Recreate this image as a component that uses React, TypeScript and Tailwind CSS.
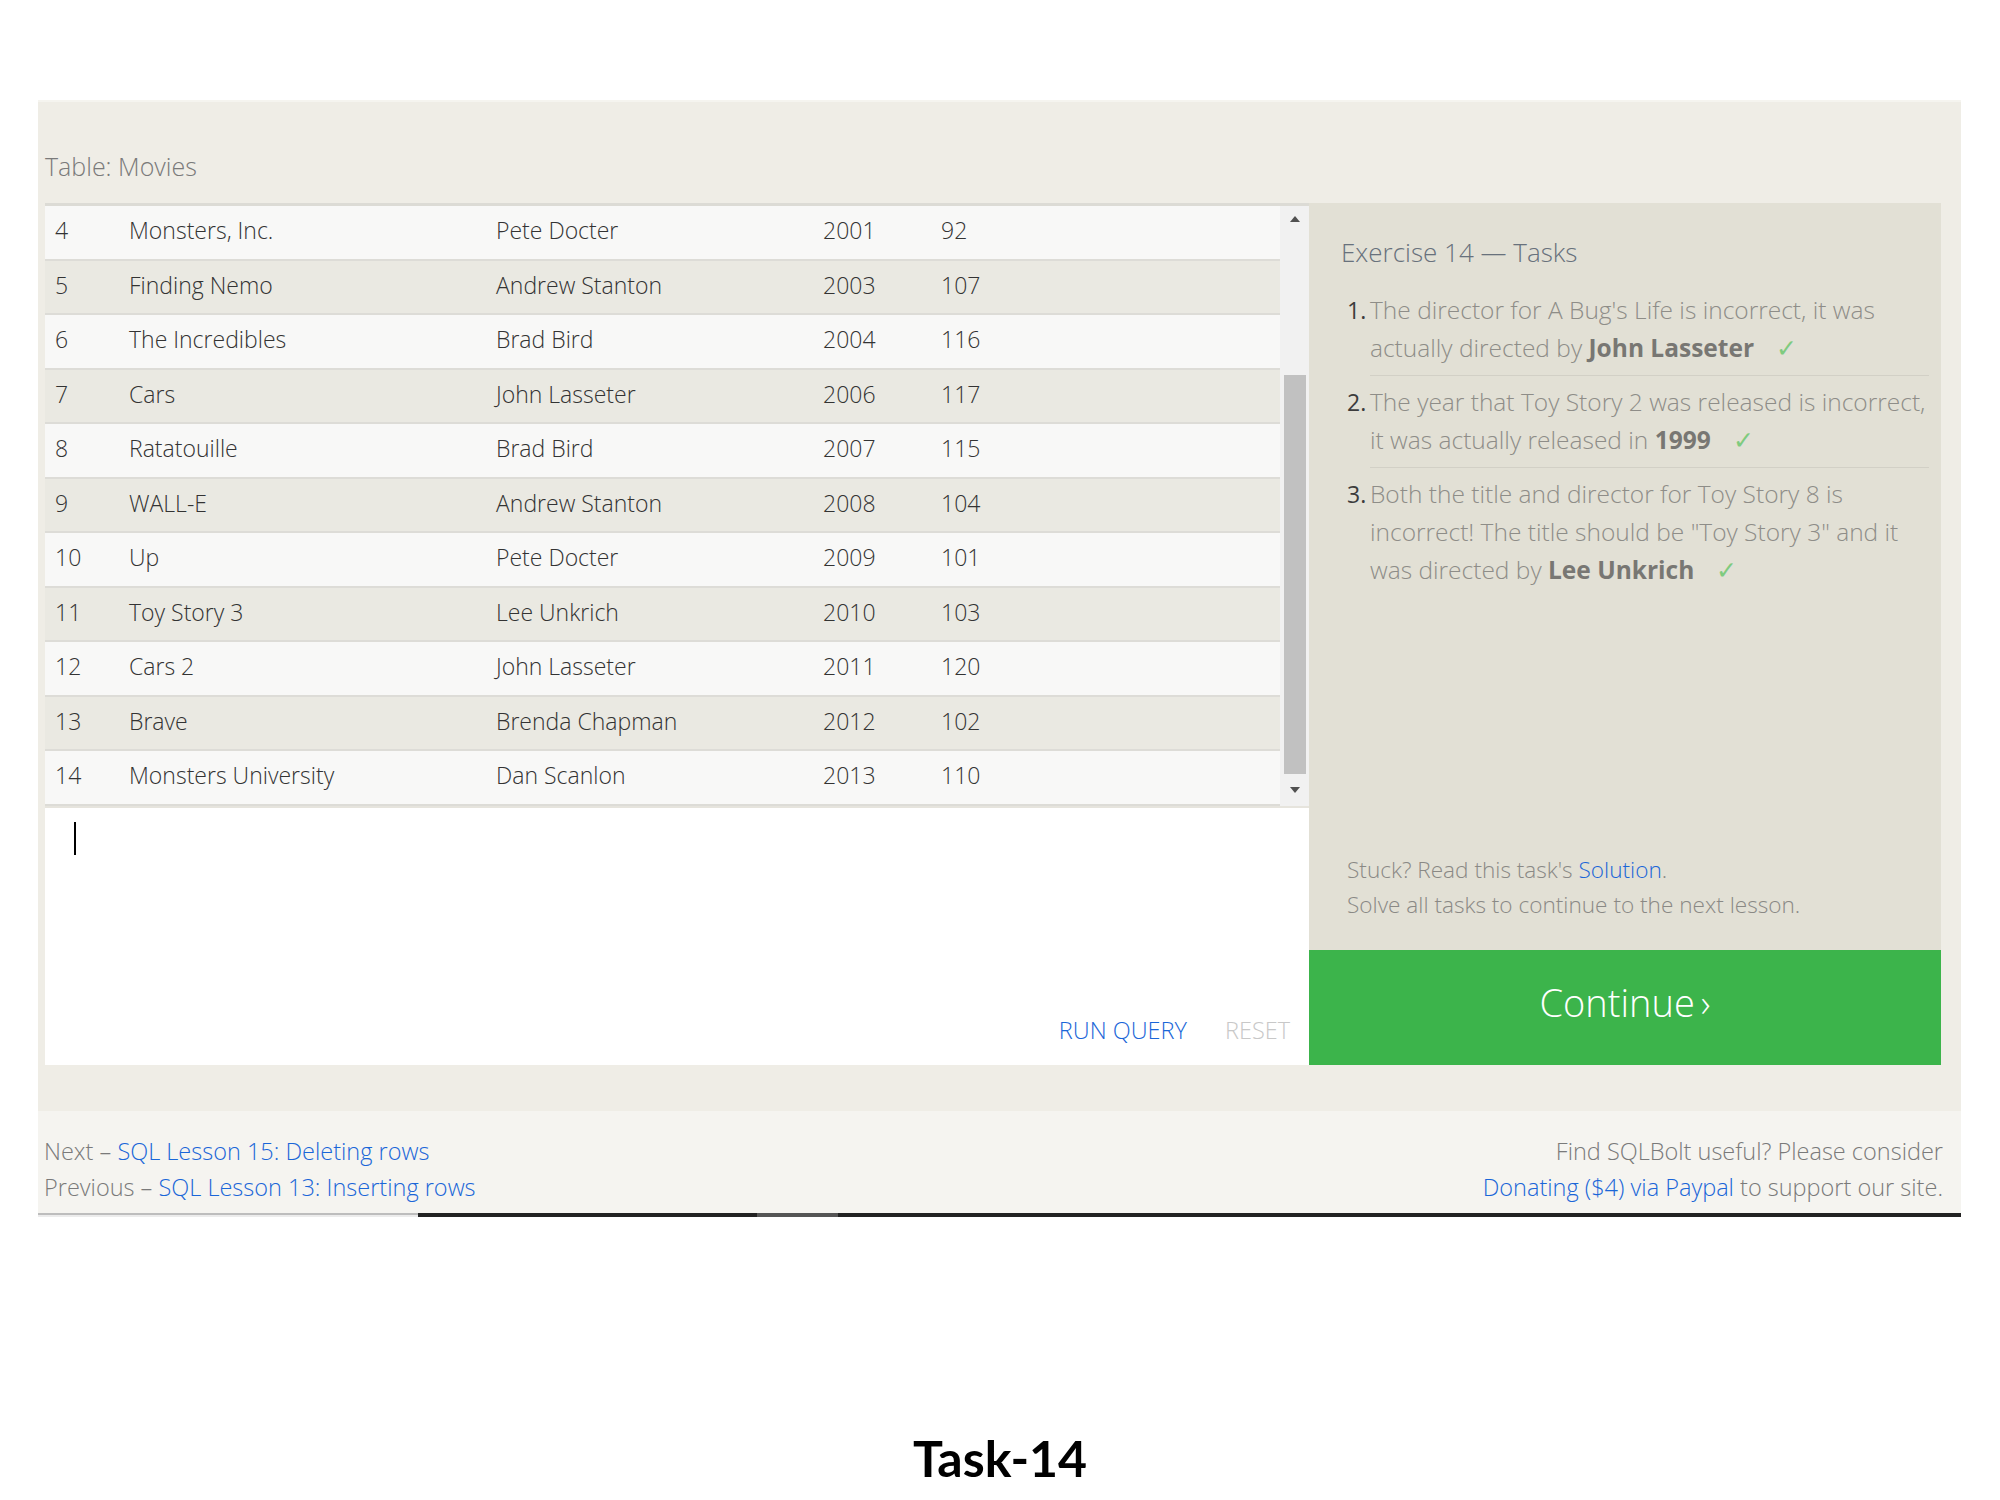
const rows: [number, string, string, number, number][] = [
  [4, "Monsters, Inc.", "Pete Docter", 2001, 92],
  [5, "Finding Nemo", "Andrew Stanton", 2003, 107],
  [6, "The Incredibles", "Brad Bird", 2004, 116],
  [7, "Cars", "John Lasseter", 2006, 117],
  [8, "Ratatouille", "Brad Bird", 2007, 115],
  [9, "WALL-E", "Andrew Stanton", 2008, 104],
  [10, "Up", "Pete Docter", 2009, 101],
  [11, "Toy Story 3", "Lee Unkrich", 2010, 103],
  [12, "Cars 2", "John Lasseter", 2011, 120],
  [13, "Brave", "Brenda Chapman", 2012, 102],
  [14, "Monsters University", "Dan Scanlon", 2013, 110],
];

function Check() {
  return <span className="ml-[22px] text-[#7fcb7f]">✓</span>;
}

function App() {
  return (
    <div className="min-h-screen bg-white pt-[100px] font-['Open_Sans',sans-serif] font-light">
      <div className="mx-[38px] w-[1923px] bg-[#efede6] border-t-2 border-[#f5f4ef]">
        {/* table + editor + tasks */}
        <div className="pl-[7px] pr-[20px] pt-[49px]">
          <div className="mb-[21px] text-[25px] leading-[31px] text-[#7a7a7a]">Table: Movies</div>

          <div className="flex">
            {/* left column */}
            <div className="w-[1264px] flex flex-col">
              <div className="flex border-t-[3px] border-[#dcdbd5]">
                <div className="flex-1">
                  {rows.map((r, i) => (
                    <div
                      key={r[0]}
                      className={
                        "flex items-center h-[54.5px] pb-[4px] border-b-2 border-[#dddcd7] text-[23px] text-[#333] " +
                        (i % 2 === 0 ? "bg-[#f8f8f7]" : "bg-[#eae9e2]")
                      }
                    >
                      <div className="w-[84px] pl-[10px]">{r[0]}</div>
                      <div className="w-[367px]">{r[1]}</div>
                      <div className="w-[327px]">{r[2]}</div>
                      <div className="w-[118px]">{r[3]}</div>
                      <div className="flex-1">{r[4]}</div>
                    </div>
                  ))}
                </div>
                {/* scrollbar */}
                <div className="w-[29px] bg-[#f1f1f1] flex flex-col items-center">
                  <svg width="10" height="6" viewBox="0 0 10 6" className="mt-[10px]">
                    <path d="M0 6 L5 0 L10 6 Z" fill="#505050" />
                  </svg>
                  <div className="mt-[153px] h-[399px] w-[22px] bg-[#c1c1c1]" />
                  <svg width="10" height="6" viewBox="0 0 10 6" className="mt-[13px]">
                    <path d="M0 0 L10 0 L5 6 Z" fill="#505050" />
                  </svg>
                </div>
              </div>

              {/* editor */}
              <div className="h-[259px] bg-white border-t-2 border-[#e6e4dd] flex flex-col justify-between">
                <div className="ml-[29px] mt-[14px] w-[2px] h-[33px] bg-black" />
                <div className="flex justify-end gap-[38px] pr-[19px] pb-[19px] text-[23.5px] leading-[32px]">
                  <span className="text-[#1a66d8]">RUN QUERY</span>
                  <span className="text-[#c8c8c8]">RESET</span>
                </div>
              </div>
            </div>

            {/* right column */}
            <div className="w-[632px] flex flex-col">
              <div className="flex-1 bg-[#e2e0d5] flex flex-col justify-between">
                <div className="pt-[31px] pl-[32px] pr-[12px]">
                  <h2 className="text-[26px] leading-[36px] text-[#68717c]">Exercise 14 — Tasks</h2>
                  <ol className="mt-[14px] pl-[6px] text-[24.5px] leading-[38px] text-[#8e8d88]">
                    <li className="flex">
                      <span className="w-[23px] pt-[7px] text-[#3c3c3c] font-normal text-[23px]">1.</span>
                      <div className="flex-1 pt-[7px] pb-[8px] border-b border-[#d2d0c6] whitespace-nowrap">
                        The director for A Bug's Life is incorrect, it was
                        <br />
                        actually directed by <b className="font-bold text-[#787773]">John Lasseter</b>
                        <Check />
                      </div>
                    </li>
                    <li className="flex">
                      <span className="w-[23px] pt-[7px] text-[#3c3c3c] font-normal text-[23px]">2.</span>
                      <div className="flex-1 pt-[7px] pb-[8px] border-b border-[#d2d0c6] whitespace-nowrap">
                        The year that Toy Story 2 was released is incorrect,
                        <br />
                        it was actually released in <b className="font-bold text-[#787773]">1999</b>
                        <Check />
                      </div>
                    </li>
                    <li className="flex">
                      <span className="w-[23px] pt-[7px] text-[#3c3c3c] font-normal text-[23px]">3.</span>
                      <div className="flex-1 pt-[7px] pb-[8px] whitespace-nowrap">
                        Both the title and director for Toy Story 8 is
                        <br />
                        incorrect! The title should be "Toy Story 3" and it
                        <br />
                        was directed by <b className="font-bold text-[#787773]">Lee Unkrich</b>
                        <Check />
                      </div>
                    </li>
                  </ol>
                </div>
                <div className="pl-[38px] pb-[28px] text-[22.6px] leading-[35px] text-[#8a8985]">
                  <div>
                    Stuck? Read this task's <span className="text-[#1a66d8]">Solution</span>.
                  </div>
                  <div>Solve all tasks to continue to the next lesson.</div>
                </div>
              </div>
              <div className="h-[115px] pb-[10px] bg-[#3cb44b] flex items-center justify-center text-white text-[38px]">
                Continue<span className="ml-[6px]">›</span>
              </div>
            </div>
          </div>
        </div>

        {/* footer */}
        <div className="mt-[46px] h-[102px] bg-[#f5f4f0] flex justify-between pl-[6px] pr-[18px] pt-[22px] text-[23.5px] leading-[36px] text-[#7a7a7a]">
          <div>
            <div>
              Next – <span className="text-[#1a66d8]">SQL Lesson 15: Deleting rows</span>
            </div>
            <div>
              Previous – <span className="text-[#1a66d8]">SQL Lesson 13: Inserting rows</span>
            </div>
          </div>
          <div className="text-right">
            <div>Find SQLBolt useful? Please consider</div>
            <div>
              <span className="text-[#1a66d8]">Donating ($4) via Paypal</span> to support our site.
            </div>
          </div>
        </div>
        <div className="flex h-[4px]">
          <div className="w-[380px] flex flex-col">
            <div className="h-[2px] bg-[#bdbdbd]" />
            <div className="h-[2px] bg-[#ececec]" />
          </div>
          <div className="w-[339px] bg-[#222]" />
          <div className="w-[81px] bg-[#555]" />
          <div className="flex-1 bg-[#222]" />
        </div>
      </div>

      <div className="mt-[210px] text-center font-['Lato',sans-serif] font-bold text-[50px] leading-[62px] text-black">
        Task-14
      </div>
    </div>
  );
}

export default App;
